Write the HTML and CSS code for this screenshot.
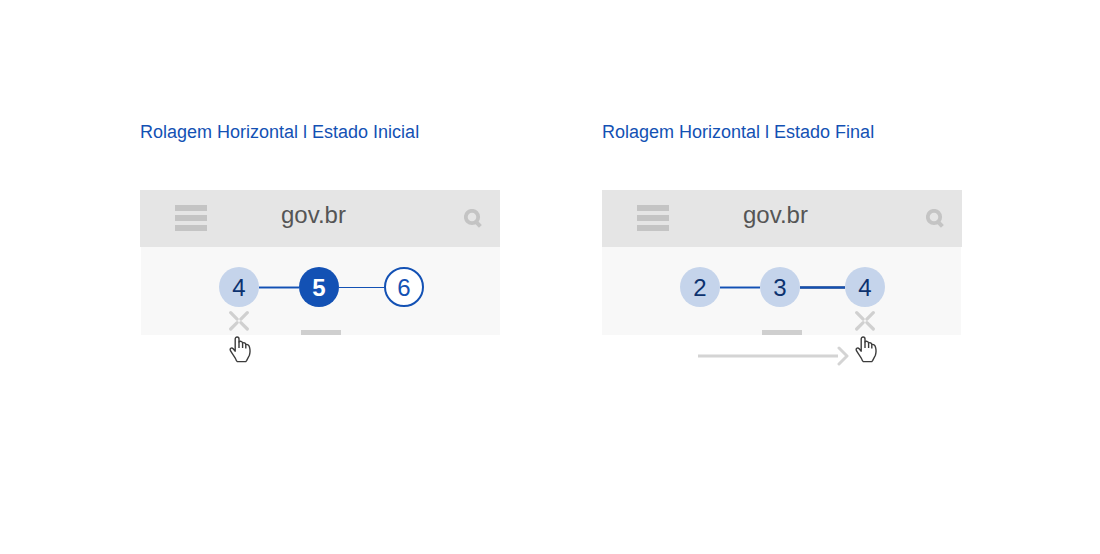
FILE: index.html
```html
<!DOCTYPE html>
<html lang="pt-BR">
<head>
<meta charset="utf-8">
<meta name="viewport" content="width=device-width, initial-scale=1">
<title>Rolagem Horizontal</title>
<link rel="stylesheet" href="styles.css">
</head>
<body>
<svg class="defs" aria-hidden="true">
  <symbol id="menu" viewBox="0 0 32 26"><path d="M0 0h32v6H0zM0 10h32v6H0zM0 20h32v6H0z" fill="#c4c4c4"/></symbol>
  <symbol id="search" viewBox="0 0 18 20"><circle cx="8" cy="8" r="6.2" fill="none" stroke="#c4c4c4" stroke-width="3.8"/><path d="M11.8 12.6l4.6 4.8" stroke="#c4c4c4" stroke-width="4"/></symbol>
  <symbol id="touch" viewBox="0 0 20 20"><path d="M1.7 1.7l6.4 6.4M18.3 1.7l-6.4 6.4M1.7 18l6.4-6.4M18.3 18l-6.4-6.4" fill="none" stroke="#d0d0d0" stroke-width="3.2" stroke-linecap="round"/></symbol>
  <symbol id="hand" viewBox="0 0 22 27"><path d="M6.2 15.8V3C6.2 .3 10 .3 10 3V5.9C11 4.9 13.2 5.2 13.6 7C14.8 6.2 16.6 6.9 16.8 8.5C18.6 8 20.3 9.4 20.6 11.6C21.3 14.2 21.1 16.8 20.4 19.2L17.6 24.6L16.8 25.6H8.3L7.4 24.6C6.6 21.6 3.6 18.6 1.6 14.9C.3 12.5 2.5 11 4.2 12.8L6.2 15.2" fill="#fff" stroke="#3c3c3c" stroke-width="1.4" stroke-linejoin="round"/><path d="M10 5.4V12M13.6 6.6V12M16.8 8.2V12.6" fill="none" stroke="#3c3c3c" stroke-width="1.4"/></symbol>
</svg>
<main class="examples">
  <section class="example">
    <h2 class="title">Rolagem Horizontal l Estado Inicial</h2>
    <header class="bar">
      <button class="icon-button" type="button" aria-label="Menu"><svg class="menu"><use href="#menu"/></svg></button>
      <span class="brand">gov.br</span>
      <button class="icon-button end" type="button" aria-label="Buscar"><svg class="search"><use href="#search"/></svg></button>
    </header>
    <div class="panel inset">
      <div class="steps">
        <button class="step done" type="button">4</button>
        <span class="line"></span>
        <button class="step active" type="button">5</button>
        <span class="line long thin"></span>
        <button class="step next" type="button">6</button>
      </div>
      <div class="foot touch-first">
        <svg class="touch"><use href="#touch"/></svg>
        <span class="handle"></span>
      </div>
    </div>
    <div class="gesture start">
      <svg class="hand"><use href="#hand"/></svg>
    </div>
  </section>
  <section class="example">
    <h2 class="title">Rolagem Horizontal l Estado Final</h2>
    <header class="bar">
      <button class="icon-button" type="button" aria-label="Menu"><svg class="menu"><use href="#menu"/></svg></button>
      <span class="brand">gov.br</span>
      <button class="icon-button end" type="button" aria-label="Buscar"><svg class="search"><use href="#search"/></svg></button>
    </header>
    <div class="panel">
      <div class="steps">
        <button class="step done" type="button">2</button>
        <span class="line"></span>
        <button class="step done" type="button">3</button>
        <span class="line long strong"></span>
        <button class="step done" type="button">4</button>
      </div>
      <div class="foot handle-first">
        <span class="handle"></span>
        <svg class="touch"><use href="#touch"/></svg>
      </div>
    </div>
    <div class="gesture drag">
      <svg class="arrow" viewBox="0 0 151 20" aria-hidden="true"><path d="M0 10h140" stroke="#d4d4d4" stroke-width="3"/><path d="M141 2l8 8-8 8" fill="none" stroke="#d4d4d4" stroke-width="3" stroke-linecap="round" stroke-linejoin="round"/></svg>
      <svg class="hand"><use href="#hand"/></svg>
    </div>
  </section>
</main>
</body>
</html>
```
FILE: styles.css
```css
* {
  box-sizing: border-box;
}

body {
  margin: 0;
  background: #fff;
  font-family: "Liberation Sans", Arial, sans-serif;
}

svg {
  display: block;
  flex: none;
}

.defs {
  position: absolute;
  width: 0;
  height: 0;
}

.examples {
  display: grid;
  grid-template-columns: repeat(2, minmax(0, 1fr));
  gap: 102px;
  padding: 120px 138px 120px 140px;
}

.title {
  margin: 0 0 46px;
  font-size: 18px;
  line-height: 24px;
  font-weight: 400;
  color: #1351b4;
  white-space: nowrap;
}

.bar {
  display: flex;
  align-items: flex-start;
  padding: 15px 18px 16px 35px;
  background: #e5e5e5;
}

.icon-button {
  padding: 0;
  border: 0;
  background: none;
}

.icon-button.end {
  margin: 4px 0 0 auto;
}

.menu {
  width: 32px;
  height: 26px;
}

.search {
  width: 18px;
  height: 20px;
}

.brand {
  margin-left: 74px;
  font-size: 24px;
  line-height: 20px;
  color: #555;
}

.panel {
  margin-right: 1px;
  padding-top: 20px;
  background: #f8f8f8;
}

.panel.inset {
  margin: 0 0 0 1px;
}

.steps {
  display: flex;
  align-items: center;
  padding-left: 78px;
}

.step {
  flex: none;
  width: 40px;
  height: 40px;
  padding: 2px 0 0;
  border: 0;
  border-radius: 50%;
  font: 24px/38px "Liberation Sans", Arial, sans-serif;
  text-align: center;
}

.done {
  background: #c5d4eb;
  color: #0c326f;
}

.active {
  background: #1351b4;
  color: #fff;
  font-weight: 700;
}

.next {
  padding: 0;
  border: 2px solid #1351b4;
  background: #fff;
  color: #1351b4;
}

.line {
  width: 40px;
  height: 3px;
  margin-top: 1px;
  border: solid #8ba9d9;
  border-width: 1px 0;
  background: #1351b4;
}

.long {
  width: 45px;
}

.thin {
  height: 1px;
  border: 0;
}

.strong {
  border-color: #4068ac;
}

.foot {
  display: flex;
  align-items: flex-end;
  height: 28px;
}

.touch {
  width: 20px;
  height: 20px;
  margin-bottom: 4px;
}

.handle {
  width: 40px;
  height: 5px;
  background: #cfcfcf;
}

.touch-first {
  gap: 52px;
  padding-left: 88px;
}

.handle-first {
  gap: 53px;
  padding-left: 160px;
}

.gesture {
  display: flex;
  align-items: flex-start;
  gap: 6px;
  padding-top: 1px;
}

.start {
  padding-left: 89px;
}

.drag {
  padding-left: 96px;
}

.arrow {
  width: 151px;
  height: 20px;
  margin-top: 10px;
}

.hand {
  width: 22px;
  height: 27px;
}
```
